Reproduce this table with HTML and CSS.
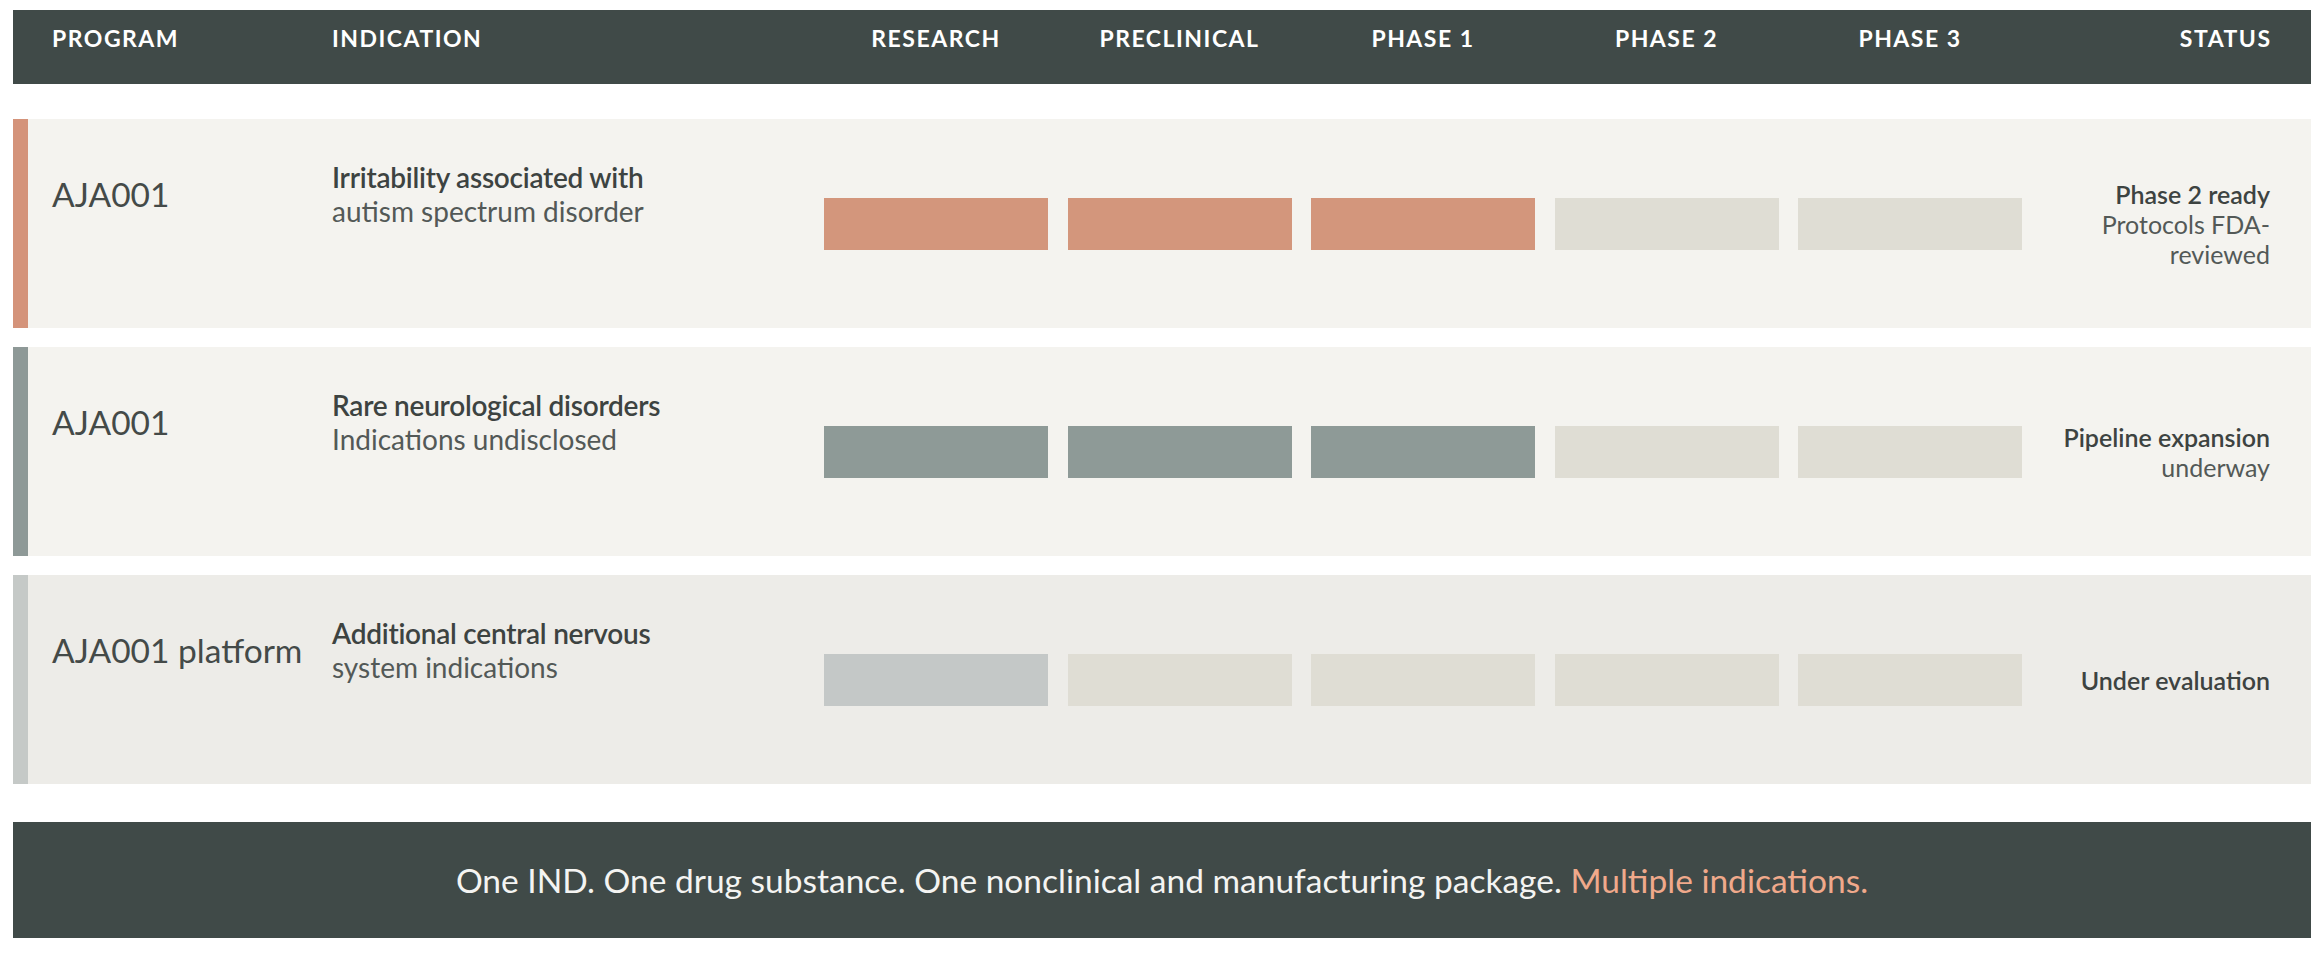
FILE: index.html
```html
<!DOCTYPE html>
<html lang="en">
<head>
<meta charset="utf-8">
<title>Pipeline</title>
<link rel="stylesheet" href="styles.css">
</head>
<body>
<main class="pipeline">
  <div class="head">
    <div class="hcell">Program</div>
    <div class="hcell">Indication</div>
    <div class="hcell center">Research</div>
    <div class="hcell center">Preclinical</div>
    <div class="hcell center">Phase 1</div>
    <div class="hcell center">Phase 2</div>
    <div class="hcell center">Phase 3</div>
    <div class="hcell right">Status</div>
  </div>

  <div class="row row-orange">
    <div class="info">
      <div class="program">AJA001</div>
      <div class="indication">
        <div class="ind-main">Irritability associated with</div>
        <div class="ind-sub">autism spectrum disorder</div>
      </div>
    </div>
    <div class="bar bar-orange"></div>
    <div class="bar bar-orange"></div>
    <div class="bar bar-orange"></div>
    <div class="bar bar-empty"></div>
    <div class="bar bar-empty"></div>
    <div class="status">
      <div class="st-main">Phase 2 ready</div>
      <div class="st-sub">Protocols FDA-reviewed</div>
    </div>
  </div>

  <div class="row row-slate">
    <div class="info">
      <div class="program">AJA001</div>
      <div class="indication">
        <div class="ind-main">Rare neurological disorders</div>
        <div class="ind-sub">Indications undisclosed</div>
      </div>
    </div>
    <div class="bar bar-slate"></div>
    <div class="bar bar-slate"></div>
    <div class="bar bar-slate"></div>
    <div class="bar bar-empty"></div>
    <div class="bar bar-empty"></div>
    <div class="status">
      <div class="st-main">Pipeline expansion</div>
      <div class="st-sub">underway</div>
    </div>
  </div>

  <div class="row row-light">
    <div class="info">
      <div class="program">AJA001 platform</div>
      <div class="indication">
        <div class="ind-main">Additional central nervous</div>
        <div class="ind-sub">system indications</div>
      </div>
    </div>
    <div class="bar bar-light"></div>
    <div class="bar bar-empty"></div>
    <div class="bar bar-empty"></div>
    <div class="bar bar-empty"></div>
    <div class="bar bar-empty"></div>
    <div class="status">
      <div class="st-main">Under evaluation</div>
    </div>
  </div>

  <div class="footer">
    <p class="tagline">One IND. One drug substance. One nonclinical and manufacturing package. <span class="accent">Multiple indications.</span></p>
  </div>
</main>
</body>
</html>
```

FILE: styles.css
```css
* { box-sizing: border-box; }

html, body {
  margin: 0;
  padding: 0;
  background: #ffffff;
}

body {
  font-family: "Lato", "Noto Sans", "Liberation Sans", sans-serif;
  color: #3f4543;
}

.pipeline {
  padding: 10px 13px 0 13px;
  display: flex;
  flex-direction: column;
}

.head,
.row {
  display: grid;
  grid-template-columns: 260.5px 472.5px repeat(5, 224px) 1fr;
  column-gap: 19.5px;
  padding-right: 41px;
}

.head {
  height: 74px;
  background: #404a48;
  padding-left: 39px;
  padding-top: 14px;
  align-items: start;
}

.hcell {
  color: #ffffff;
  font-weight: 700;
  font-size: 23px;
  line-height: 28px;
  letter-spacing: 1.5px;
  text-transform: uppercase;
  white-space: nowrap;
}

.hcell.center { text-align: center; }
.hcell.right { text-align: right; margin-right: -1.5px; }

.row {
  height: 209px;
  margin-top: 19px;
  padding-left: 24px;
  border-left: 15px solid transparent;
  background: #f4f3ef;
  align-items: center;
}

.head + .row { margin-top: 35px; }

.row-orange { border-left-color: #d4937a; }
.row-slate { border-left-color: #8e9997; }
.row-light { border-left-color: #c5c9c7; background: #edece8; }

.info {
  grid-column: 1 / 3;
  align-self: start;
  padding-top: 41px;
  display: grid;
  grid-template-columns: 260.5px 1fr;
  column-gap: 19.5px;
  align-items: center;
}

.program {
  font-size: 33.5px;
  line-height: 40px;
  color: #444a48;
  white-space: nowrap;
}

.indication {
  font-size: 28px;
  line-height: 34px;
}

.ind-main {
  font-weight: 600;
  letter-spacing: -0.25px;
  color: #3d4341;
}

.ind-sub {
  color: #535957;
}

.bar {
  height: 52px;
}

.bar-orange { background: #d3967c; }
.bar-slate { background: #8e9a97; }
.bar-light { background: #c4c8c7; }
.bar-empty { background: #dfddd4; }

.status {
  text-align: right;
  font-size: 25px;
  line-height: 30px;
}

.st-main {
  font-weight: 600;
  color: #3d4341;
}

.st-sub {
  color: #535957;
}

.footer {
  margin-top: 38px;
  height: 116px;
  background: #404a48;
  display: flex;
  align-items: center;
  justify-content: center;
}

.tagline {
  margin: 0;
  font-size: 33.5px;
  line-height: 40px;
  color: #f4f4f2;
}

.accent {
  color: #f0a98b;
}
```
